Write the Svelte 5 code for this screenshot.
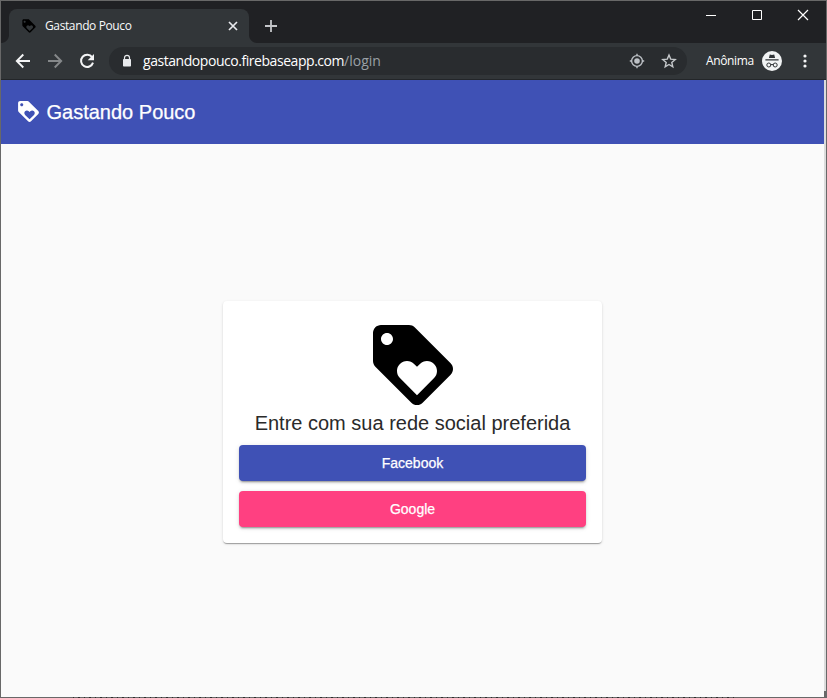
<script>
  const providers = [
    { name: 'Facebook', kind: 'primary' },
    { name: 'Google', kind: 'accent' }
  ];
  const tagPath =
    'M21.41 11.58l-9-9C12.05 2.22 11.55 2 11 2H4c-1.1 0-2 .9-2 2v7c0 .55.22 1.05.59 1.42l9 9c.36.36.86.58 1.41.58.55 0 1.05-.22 1.41-.59l7-7c.37-.36.59-.86.59-1.41 0-.55-.23-1.06-.59-1.42zM5.5 7C4.67 7 4 6.33 4 5.5S4.67 4 5.5 4 7 4.67 7 5.5 6.33 7 5.5 7zm11.77 8.27L13 19.54l-4.27-4.27C8.28 14.81 8 14.19 8 13.5c0-1.38 1.12-2.5 2.5-2.5.69 0 1.32.28 1.77.74l.73.72.73-.73c.45-.45 1.08-.73 1.77-.73 1.38 0 2.5 1.12 2.5 2.5 0 .69-.28 1.32-.73 1.77z';
</script>

{#snippet tag(size)}
  <svg width={size} height={size} viewBox="0 0 24 24" fill="currentColor"><path d={tagPath} /></svg>
{/snippet}

<div class="window">
  <div class="tabstrip">
    <div class="edge"></div>
    <div class="tab">
      <span class="favicon">{@render tag(16)}</span>
      <span class="tabtitle">Gastando Pouco</span>
      <svg class="tabclose" width="10" height="10" viewBox="0 0 10 10"><path d="M1 1l8 8M9 1L1 9" stroke="#e8eaed" stroke-width="1.7" /></svg>
    </div>
    <div class="flare"></div>
    <svg class="newtab" width="14" height="14" viewBox="0 0 14 14"><path d="M7 1v12M1 7h12" stroke="#c4c6c9" stroke-width="1.8" /></svg>
    <div class="controls">
      <svg width="46" height="30" viewBox="0 0 46 30"><path d="M18 14.5h10" stroke="#fff" /></svg>
      <svg width="46" height="30" viewBox="0 0 46 30"><path d="M18.5 9.5h9v9h-9z" fill="none" stroke="#fff" /></svg>
      <svg width="46" height="30" viewBox="0 0 46 30"><path d="M18 9l10 10M28 9L18 19" stroke="#fff" stroke-width="1.2" /></svg>
    </div>
  </div>

  <div class="toolbar">
    <svg class="nav" width="16" height="16" viewBox="0 0 16 16"><path d="M15 8H2M8.3 1.5L1.8 8l6.5 6.5" fill="none" stroke="#f4f5f6" stroke-width="1.9" /></svg>
    <svg class="nav" width="16" height="16" viewBox="0 0 16 16"><path d="M1 8h13M7.7 1.5L14.2 8l-6.5 6.5" fill="none" stroke="#85888a" stroke-width="1.9" /></svg>
    <svg class="nav" width="16" height="16" viewBox="0 0 16 16"><path d="M13.1 4.2A6.1 6.1 0 1 0 14 9.6" fill="none" stroke="#f4f5f6" stroke-width="2" /><path d="M15 1v6.3H8.7z" fill="#f4f5f6" /></svg>
    <div class="address">
      <svg class="lock" width="10" height="14" viewBox="0 0 10 14"><path d="M2.5 6V3.8a2.5 2.5 0 0 1 5 0V6" fill="none" stroke="#e8eaed" stroke-width="1.2" /><rect x="1" y="5" width="8" height="7.5" rx=".8" fill="#e8eaed" /></svg>
      <span class="url"><span class="domain">gastandopouco.firebaseapp.com</span><span class="path">/login</span></span>
      <svg class="locate" width="16" height="16" viewBox="0 0 16 16"><circle cx="8" cy="8" r="5.4" fill="none" stroke="#bdc1c6" stroke-width="1.4" /><circle cx="8" cy="8" r="2.8" fill="#bdc1c6" /><path d="M8 .8v2M8 13.2v2M.8 8h2M13.2 8h2" stroke="#bdc1c6" stroke-width="1.4" /></svg>
      <svg class="star" width="16" height="16" viewBox="0 0 16 16"><path d="M8 2l1.7 4.1 4.5.4-3.4 2.9 1 4.4L8 11.5l-3.8 2.3 1-4.4-3.4-2.9 4.5-.4z" fill="none" stroke="#c6c9cc" stroke-width="1.4" /></svg>
    </div>
    <span class="profile">Anônima</span>
    <svg class="incognito" width="20" height="20" viewBox="0 0 20 20">
      <circle cx="10" cy="10" r="10" fill="#f1f3f4" />
      <path d="M7.8 3.4l2.2.5 2.2-.5.9 3.6H6.9zM3.4 8.3h13.2v1.3H3.4z" fill="#303437" />
      <g fill="none" stroke="#303437" stroke-width="1"><circle cx="6.8" cy="14" r="2" /><circle cx="13.2" cy="14" r="2" /><path d="M8.8 13.8q1.2-.8 2.4 0" /></g>
    </svg>
    <svg class="menu" width="4" height="14" viewBox="0 0 4 14" fill="#f4f5f6"><circle cx="2" cy="2" r="1.6" /><circle cx="2" cy="7" r="1.6" /><circle cx="2" cy="12" r="1.6" /></svg>
  </div>

  <div class="viewport">
    <div class="page">
      <header>{@render tag(25)}<span>Gastando Pouco</span></header>
      <main>
        <section class="card">
          {@render tag(96)}
          <h1>Entre com sua rede social preferida</h1>
          {#each providers as p}
            <button class={p.kind}>{p.name}</button>
          {/each}
        </section>
      </main>
    </div>
    <div class="scroll"></div>
  </div>
  <div class="fringe"></div>
</div>

<style>
  :global(body) { margin: 0; overflow: hidden; }
  svg { display: block; flex: none; }
  .window { position: relative; box-sizing: border-box; width: 827px; height: 698px; border: 1px solid #686868; display: flex; flex-direction: column; background: #323639; font-family: "Open Sans", "Noto Sans", sans-serif; }
  .fringe { position: absolute; left: 72px; right: 90px; bottom: -1px; height: 1px; background: repeating-linear-gradient(90deg, #2c2c2c 0 1px, #686868 1px 5px, #2c2c2c 5px 7px, #686868 7px 11px); }
  .tabstrip { height: 42px; display: flex; background: #202124; }
  .edge { width: 8px; background: radial-gradient(circle at 0 0, #202124 7.5px, #323639 8.5px) bottom / 8px 8px no-repeat; }
  .flare { width: 8px; background: radial-gradient(circle at 8px 0, #202124 7.5px, #323639 8.5px) bottom / 8px 8px no-repeat; }
  .tab { box-sizing: border-box; width: 240px; height: 34px; margin-top: 8px; padding: 0 11px 0 12px; border-radius: 8px 8px 0 0; background: #323639; display: flex; align-items: center; }
  .favicon { color: #000; margin-top: -1px; }
  .tabtitle { flex: 1; margin-left: 8px; font-size: 12px; line-height: 16px; letter-spacing: -.38px; color: #f8f9fa; white-space: nowrap; }
  .newtab { margin: 18px 0 0 7px; }
  .controls { display: flex; margin-left: auto; }
  .toolbar { box-sizing: border-box; height: 37px; border-bottom: 1px solid #232629; display: flex; align-items: center; padding-left: 14px; }
  .nav { margin-right: 16px; }
  .address { box-sizing: border-box; width: 578px; height: 28px; margin-left: -2px; padding: 0 10px 0 13px; border-radius: 14px; background: #292c2f; display: flex; align-items: center; }
  .url { flex: 1; margin-left: 11px; font-size: 14px; line-height: 20px; white-space: nowrap; }
  .domain { color: #fff; letter-spacing: -.45px; }
  .path { color: #9aa0a6; }
  .star { margin-left: 16px; }
  .profile { width: 48px; margin-left: 19px; font-size: 12px; line-height: 16px; letter-spacing: -.38px; color: #fff; white-space: nowrap; }
  .incognito { margin-left: 8px; }
  .menu { margin-left: 20.5px; }
  .viewport { flex: 1; display: flex; font-family: "Liberation Sans", Arial, sans-serif; }
  .page { width: 823px; display: flex; flex-direction: column; background: #fafafa; }
  .scroll { box-sizing: border-box; width: 2px; height: 617px; background: #dcdcdc; border-bottom: 6px solid #686868; }
  header { box-sizing: border-box; height: 64px; padding: 0 15px 1px; display: flex; align-items: center; gap: 5.5px; background: #3f51b5; color: #fff; font-size: 20px; -webkit-text-stroke: .25px #fff; }
  header span { padding-top: 1px; }
  main { flex: 1; display: flex; align-items: flex-start; justify-content: center; padding-top: 157px; }
  .card { box-sizing: border-box; width: 379px; height: 242px; padding: 16px; border-radius: 4px; background: #fff; display: flex; flex-direction: column; align-items: center; box-shadow: 0 2px 1px -1px rgba(0,0,0,.2), 0 1px 1px rgba(0,0,0,.14), 0 1px 3px rgba(0,0,0,.12); }
  h1 { margin: 0; padding-bottom: 12px; font-size: 20px; line-height: 20px; font-weight: 400; color: #2a2a2a; white-space: nowrap; }
  button { width: 100%; height: 36px; flex: none; border: 0; border-radius: 4px; padding: 0; color: #fff; font: 500 14px/36px "Liberation Sans", Arial, sans-serif; -webkit-text-stroke: .25px #fff; box-shadow: 0 3px 1px -2px rgba(0,0,0,.2), 0 2px 2px rgba(0,0,0,.14), 0 1px 5px rgba(0,0,0,.12); }
  button + button { margin-top: 10px; }
  .primary { background: #3f51b5; }
  .accent { background: #ff4081; }
</style>
